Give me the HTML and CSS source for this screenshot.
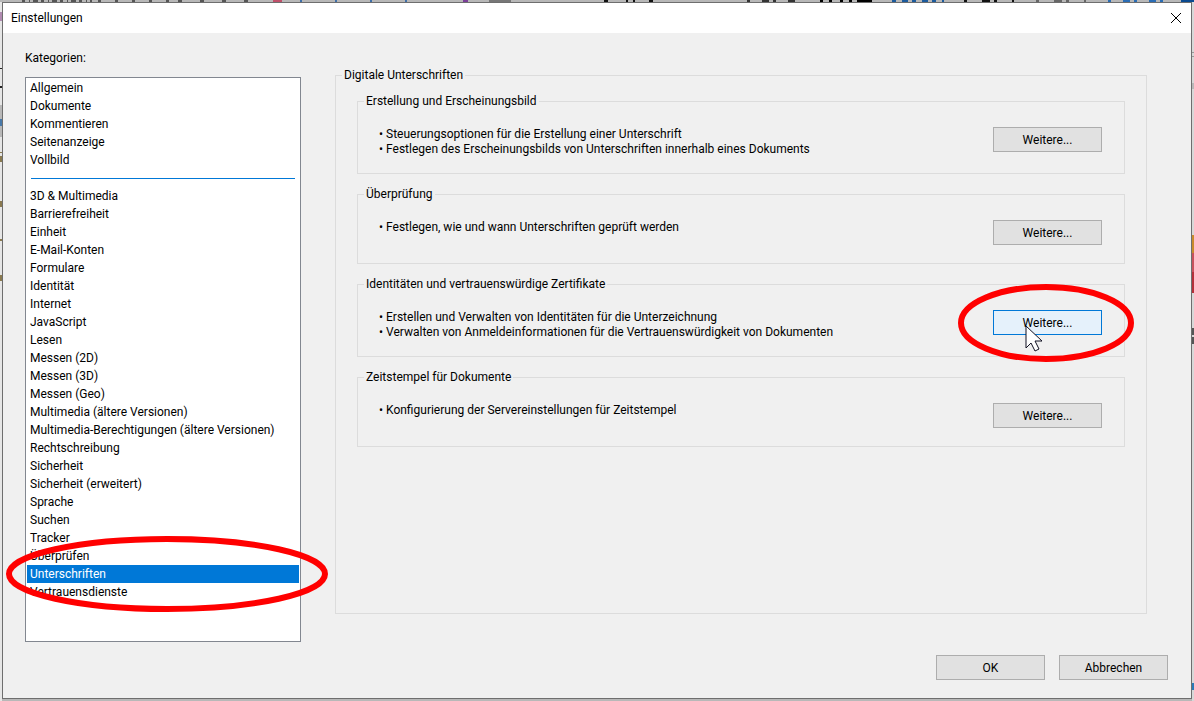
FILE: index.html
```html
<!DOCTYPE html>
<html lang="de">
<head>
    <meta charset="UTF-8">
    <meta name="viewport" content="width=device-width, initial-scale=1.0">
    <title>Einstellungen</title>
    <link rel="stylesheet" href="styles.css">
</head>
<body>

<!-- Programmfenster hinter dem Dialog -->
<svg class="behind behind-top" width="1194" height="2" aria-hidden="true">
    <path stroke="#555" stroke-width="2" stroke-dasharray="3 4 1 3 5 3" d="M22 1h70"/>
    <path stroke="#555" stroke-width="2" stroke-dasharray="3 14" d="M98 1h80"/>
    <path stroke="#555" stroke-width="2" stroke-dasharray="4 18" d="M178 1h80"/>
    <path stroke="#c0506a" stroke-width="2" d="M273 1h9"/>
    <path stroke="#3f6fa8" stroke-width="2" stroke-dasharray="2 33" d="M300 1h140"/>
    <path stroke="#7a3f98" stroke-width="2" d="M463 1h5"/>
    <path stroke="#777" stroke-width="2" d="M489 1h22"/>
    <path stroke="#111" stroke-width="2" stroke-dasharray="4 18 2 5 2 14" d="M604 1h55"/>
    <path stroke="#333" stroke-width="2" stroke-dasharray="3 12 7 4" d="M747 1h50"/>
    <path stroke="#000" stroke-width="2" stroke-dasharray="3 6 3 8" d="M820 1h32"/>
    <path stroke="#000" stroke-width="2" d="M857 1h15"/>
    <path stroke="#1b5a9c" stroke-width="2" stroke-dasharray="4 6 6 4" d="M892 1h52"/>
    <path stroke="#111" stroke-width="2" stroke-dasharray="3 15 8 4" d="M964 1h50"/>
    <path stroke="#666" stroke-width="2" stroke-dasharray="3 15 8 4" d="M1036 1h50"/>
    <path stroke="#2a6db5" stroke-width="2" stroke-dasharray="3 12 7 4" d="M1108 1h55"/>
    <path stroke="#0a4a90" stroke-width="2" d="M1181 1h13"/>
</svg>
<svg class="behind behind-left" width="2" height="701" aria-hidden="true">
    <path stroke="#e6e6e6" stroke-width="2" d="M1 2v103M1 137v564"/>
    <path stroke="#b08ab0" stroke-width="2" d="M1 12v9"/>
    <path stroke="#222" stroke-width="2" d="M1 68v1M1 86v2"/>
    <path stroke="#4878a8" stroke-width="2" d="M1 119v7"/>
    <path stroke="#8a7a50" stroke-width="2" d="M1 152v1M1 156v6M1 201v6M1 239v2M1 275v6"/>
</svg>
<svg class="behind behind-right" width="2" height="701" aria-hidden="true">
    <path stroke="#d8d8d8" stroke-width="2" d="M1 2v81M1 89v612"/>
    <path stroke="#999" stroke-width="2" d="M1 52v1M1 56v1"/>
    <path stroke="#c98a2c" stroke-width="2" d="M1 235v18"/>
    <path stroke="#c8525c" stroke-width="2" d="M1 253v19"/>
    <path stroke="#b5303a" stroke-width="2" d="M1 272v21"/>
    <path stroke="#555" stroke-width="2" d="M1 328v7M1 337v7"/>
    <path stroke="#2a7ab8" stroke-width="2" d="M1 683v7"/>
</svg>

<div class="dialog" role="dialog" aria-labelledby="dialogTitle">
    <header class="titlebar">
        <h1 id="dialogTitle">Einstellungen</h1>
        <button class="close" type="button" aria-label="Schließen">
            <svg width="12" height="12" viewBox="0 0 12 12"><path d="M1 1l10 10M11 1L1 11" stroke="#000" fill="none"/></svg>
        </button>
    </header>

    <form class="content">
        <div class="columns">
            <div class="categories">
                <label for="categoryList">Kategorien:</label>
                <div class="list-wrap">
                    <select id="categoryList" size="29">
                        <option>Allgemein</option>
                        <option>Dokumente</option>
                        <option>Kommentieren</option>
                        <option>Seitenanzeige</option>
                        <option>Vollbild</option>
                        <option class="separator" disabled></option>
                        <option>3D &amp; Multimedia</option>
                        <option>Barrierefreiheit</option>
                        <option>Einheit</option>
                        <option>E-Mail-Konten</option>
                        <option>Formulare</option>
                        <option>Identität</option>
                        <option>Internet</option>
                        <option>JavaScript</option>
                        <option>Lesen</option>
                        <option>Messen (2D)</option>
                        <option>Messen (3D)</option>
                        <option>Messen (Geo)</option>
                        <option>Multimedia (ältere Versionen)</option>
                        <option>Multimedia-Berechtigungen (ältere Versionen)</option>
                        <option>Rechtschreibung</option>
                        <option>Sicherheit</option>
                        <option>Sicherheit (erweitert)</option>
                        <option>Sprache</option>
                        <option>Suchen</option>
                        <option>Tracker</option>
                        <option>Überprüfen</option>
                        <option selected>Unterschriften</option>
                        <option>Vertrauensdienste</option>
                    </select>
                    <svg class="mark mark-list" width="324" height="78" viewBox="0 0 324 78" aria-hidden="true">
                        <ellipse cx="162" cy="39" rx="158" ry="35"/>
                    </svg>
                </div>
            </div>

            <fieldset class="panel">
                <legend>Digitale Unterschriften</legend>

                <fieldset class="group">
                    <legend>Erstellung und Erscheinungsbild</legend>
                    <div class="row">
                        <ul>
                            <li>Steuerungsoptionen für die Erstellung einer Unterschrift</li>
                            <li>Festlegen des Erscheinungsbilds von Unterschriften innerhalb eines Dokuments</li>
                        </ul>
                        <button class="btn" type="button">Weitere...</button>
                    </div>
                </fieldset>

                <fieldset class="group">
                    <legend>Überprüfung</legend>
                    <div class="row">
                        <ul>
                            <li>Festlegen, wie und wann Unterschriften geprüft werden</li>
                        </ul>
                        <button class="btn" type="button">Weitere...</button>
                    </div>
                </fieldset>

                <fieldset class="group">
                    <legend>Identitäten und vertrauenswürdige Zertifikate</legend>
                    <div class="row">
                        <ul>
                            <li>Erstellen und Verwalten von Identitäten für die Unterzeichnung</li>
                            <li>Verwalten von Anmeldeinformationen für die Vertrauenswürdigkeit von Dokumenten</li>
                        </ul>
                        <div class="marked">
                            <button class="btn active" type="button">Weitere...</button>
                            <svg class="mark mark-button" width="176" height="78" viewBox="0 0 176 78" aria-hidden="true">
                                <ellipse cx="88" cy="39" rx="85" ry="36"/>
                            </svg>
                            <svg class="pointer" width="19" height="28" viewBox="0 0 19 28" aria-hidden="true">
                                <path d="M1 1v22l5-5 4 8 4-2-4-8h7z" fill="#fff" stroke="#112"/>
                            </svg>
                        </div>
                    </div>
                </fieldset>

                <fieldset class="group">
                    <legend>Zeitstempel für Dokumente</legend>
                    <div class="row">
                        <ul>
                            <li>Konfigurierung der Servereinstellungen für Zeitstempel</li>
                        </ul>
                        <button class="btn" type="button">Weitere...</button>
                    </div>
                </fieldset>
            </fieldset>
        </div>

        <footer class="actions">
            <button class="btn" type="button">OK</button>
            <button class="btn" type="button">Abbrechen</button>
        </footer>
    </form>
</div>

</body>
</html>
```
FILE: styles.css
```css
* {
    box-sizing: border-box;
}
body {
    margin: 0;
    padding: 2px;
    min-height: 100vh;
    display: flex;
    position: relative;
    background: #b8b8b8;
    color: #000;
    font-family: 'Segoe UI', Roboto, 'Open Sans', sans-serif;
    font-size: 12px;
    line-height: 16px;
}
button, select {
    font: inherit;
    color: inherit;
}

/* Hintergrund */
.behind {
    position: absolute;
    top: 0;
}
.behind-top, .behind-left {
    left: 0;
}
.behind-right {
    right: 0;
}

/* Dialog */
.dialog {
    position: relative;
    flex: 1;
    display: flex;
    flex-direction: column;
    border: 1px solid #6e6e6e;
    background: #f0f0f0;
}
.titlebar {
    display: flex;
    align-items: center;
    justify-content: space-between;
    height: 30px;
    padding: 0 8px;
    background: #fff;
}
.titlebar h1 {
    margin: 0;
    font-size: 12px;
    font-weight: normal;
}
.close {
    display: flex;
    padding: 1px;
    border: none;
    background: none;
}
.content {
    flex: 1;
    display: flex;
    flex-direction: column;
    gap: 13px;
    padding: 17px 23px 18px 22px;
}
.columns {
    flex: 1;
    display: flex;
    gap: 34px;
}

/* Kategorien */
.categories {
    display: flex;
    flex-direction: column;
    gap: 11px;
    width: 276px;
}
.list-wrap {
    position: relative;
    flex: 1;
    display: flex;
}
select {
    flex: 1;
    padding: 1px;
    overflow: hidden;
    border: 1px solid #828790;
    border-radius: 0;
    outline: none;
    background: #fff;
}
option {
    height: 18px;
    min-height: 0;
    padding: 2px 3px;
}
option:checked {
    background: #0078d7 linear-gradient(#0078d7, #0078d7);
    color: #fff;
}
option.separator {
    height: 1px;
    margin: 9px 4px 8px;
    padding: 0;
    overflow: hidden;
    background: #0078d7;
}

/* Gruppen */
fieldset {
    min-width: 0;
    margin: 0;
    border: 1px solid #dcdcdc;
}
legend {
    padding: 0 2px;
}
.panel {
    flex: 1;
    align-self: stretch;
    display: flex;
    flex-direction: column;
    gap: 12px;
    margin: 17px 21px 28px 0;
    padding: 10px 21px 0 6px;
}
.group {
    margin-left: 15px;
    padding: 18px 22px 16px 6px;
}
.row {
    display: flex;
    align-items: flex-start;
    justify-content: space-between;
    gap: 20px;
    min-height: 27px;
}
ul {
    margin: 0;
    padding: 0 0 0 15px;
    list-style: none;
    line-height: 15px;
}
li::before {
    content: '• ';
}

/* Schaltflächen */
.btn {
    width: 109px;
    height: 25px;
    padding: 0;
    border: 1px solid #adadad;
    background: #e1e1e1;
}
.btn.active {
    border-color: #0078d7;
    background: #e5f1fb;
}
.actions {
    display: flex;
    justify-content: flex-end;
    gap: 14px;
}

/* Markierungen */
.marked {
    position: relative;
    display: flex;
}
.mark {
    position: absolute;
    pointer-events: none;
}
.mark ellipse {
    fill: none;
    stroke: #f00;
    stroke-width: 6;
}
.mark-list {
    top: 458px;
    left: -20px;
}
.mark-button {
    top: -26px;
    left: -35px;
}
.pointer {
    position: absolute;
    top: 15px;
    left: 32px;
}
```
